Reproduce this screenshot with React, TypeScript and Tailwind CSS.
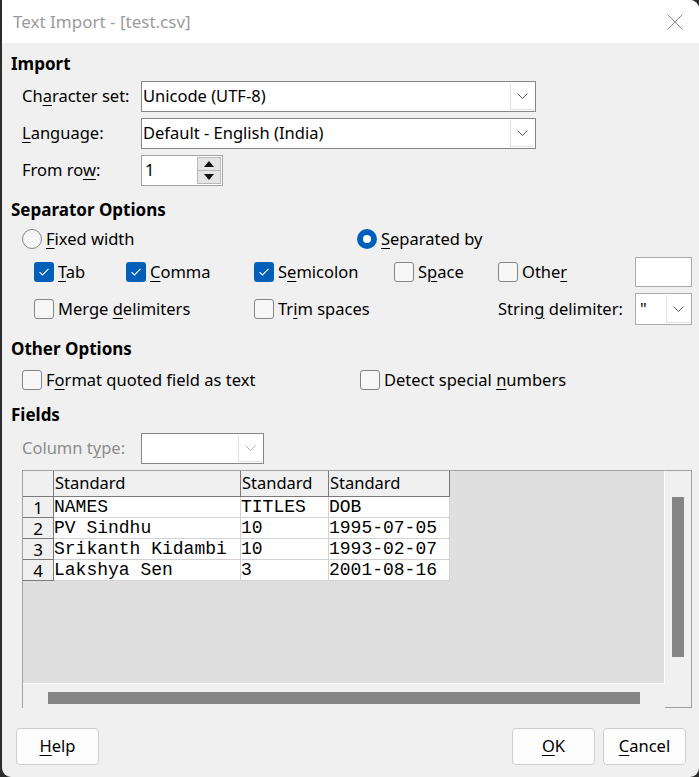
import React from 'react';
import clsx from 'clsx';

// Underlined access-key letter
const K: React.FC<{ children: React.ReactNode }> = ({ children }) => (
  <span className="underline decoration-1 underline-offset-[3px]">{children}</span>
);

const Chevron: React.FC<{ muted?: boolean }> = ({ muted }) => (
  <svg width="11" height="6" viewBox="0 0 11 6" fill="none">
    <path d="M0.5 0.5 L5.5 5.5 L10.5 0.5" stroke={muted ? '#b5b5b5' : '#5c5c5c'} strokeWidth="1" />
  </svg>
);

interface ComboProps {
  value?: string;
  className?: string;
  muted?: boolean;
  light?: boolean;
}

const Combo: React.FC<ComboProps> = ({ value, className, muted, light }) => (
  <div
    className={clsx(
      'flex bg-white border',
      light ? 'border-[#ababab]' : 'border-[#868686]',
      className
    )}
  >
    <div className="flex-1 flex items-center pl-[1px] truncate">{value}</div>
    <div className="w-[24px] my-[1px] mr-[1px] border-l border-b border-[#e2e2e2] flex items-center justify-center">
      <Chevron muted={muted} />
    </div>
  </div>
);

const Spin: React.FC<{ value: string }> = ({ value }) => (
  <div className="w-[82px] h-[31px] bg-white border border-[#a3a3a3] flex">
    <div className="flex-1 flex items-center pl-[3px]">{value}</div>
    <div className="w-[24px] mr-[1px] my-[1px] flex flex-col">
      <div className="flex-1 bg-[#e5e5e5] border border-[#b8b8b8] flex items-center justify-center">
        <svg width="10" height="6" viewBox="0 0 10 6"><path d="M0 6 L5 0 L10 6 Z" fill="#111" /></svg>
      </div>
      <div className="flex-1 bg-[#e5e5e5] border border-t-0 border-[#b8b8b8] flex items-center justify-center">
        <svg width="10" height="6" viewBox="0 0 10 6"><path d="M0 0 L5 6 L10 0 Z" fill="#111" /></svg>
      </div>
    </div>
  </div>
);

const CheckBox: React.FC<{ checked?: boolean; children: React.ReactNode; className?: string }> = ({
  checked,
  children,
  className
}) => (
  <div className={clsx('flex items-center gap-[4px]', className)}>
    {checked ? (
      <span className="w-[20px] h-[20px] rounded-[3px] bg-[#005fb8] flex items-center justify-center">
        <svg width="12" height="10" viewBox="0 0 12 10" fill="none">
          <path d="M1.5 5.2 L4.5 8 L10.5 1.8" stroke="#fff" strokeWidth="1.1" />
        </svg>
      </span>
    ) : (
      <span className="w-[20px] h-[20px] rounded-[3px] border border-[#858585] bg-[#f7f7f7]" />
    )}
    <span>{children}</span>
  </div>
);

const Radio: React.FC<{ checked?: boolean; children: React.ReactNode; className?: string }> = ({
  checked,
  children,
  className
}) => (
  <div className={clsx('flex items-center gap-[4px]', className)}>
    {checked ? (
      <span className="w-[20px] h-[20px] rounded-full bg-[#005fb8] flex items-center justify-center">
        <span className="w-[8px] h-[8px] rounded-full bg-white" />
      </span>
    ) : (
      <span className="w-[20px] h-[20px] rounded-full border border-[#858585] bg-[#f7f7f7]" />
    )}
    <span>{children}</span>
  </div>
);

const Heading: React.FC<{ children: React.ReactNode; className?: string }> = ({ children, className }) => (
  <div className={clsx('h-[20px] leading-[20px] font-bold text-[17px]', className)}>{children}</div>
);

const rows = [
  ['NAMES', 'TITLES', 'DOB'],
  ['PV Sindhu', '10', '1995-07-05'],
  ['Srikanth Kidambi', '10', '1993-02-07'],
  ['Lakshya Sen', '3', '2001-08-16']
];

const colWidths = ['w-[187px]', 'w-[88px]', 'w-[121px]'];

const Preview: React.FC = () => (
  <div className="ml-[11px] mt-[6px] w-[670px] h-[238px] border-l border-t border-r border-[#a0a0a0] flex">
    <div className="w-[642px] flex flex-col">
      <div className="h-[213px] bg-[#dfdfdf] border-r border-b border-white">
        {/* column header */}
        <div className="flex h-[26px]">
          <div className="w-[31px] bg-[#f0f0f0] border-r border-b border-[#7a7a7a]" />
          {colWidths.map((w, i) => (
            <div
              key={i}
              className={clsx(w, 'bg-[#f0f0f0] border-r border-b border-[#7a7a7a] flex items-center pl-[1px]')}
            >
              Standard
            </div>
          ))}
        </div>
        {rows.map((r, ri) => (
          <div key={ri} className="flex h-[21px]">
            <div className="w-[31px] bg-[#f0f0f0] border-r border-b border-[#7a7a7a] flex items-end justify-center leading-[18px] text-[17px]">
              {ri + 1}
            </div>
            {r.map((c, ci) => (
              <div
                key={ci}
                className={clsx(
                  colWidths[ci],
                  'bg-white border-r border-b border-[#d2d2d2] font-["Liberation_Mono",monospace] text-[18px] leading-[20px] whitespace-pre'
                )}
              >
                {c}
              </div>
            ))}
          </div>
        ))}
      </div>
      <div className="h-[24px] pt-[8px] pl-[25px]">
        <div className="w-[592px] h-[12px] bg-[#858585]" />
      </div>
    </div>
    <div className="w-[26px] border-b border-[#a0a0a0] pt-[26px] pl-[7px]">
      <div className="w-[12px] h-[160px] bg-[#858585]" />
    </div>
  </div>
);

const DialogButton: React.FC<{ children: React.ReactNode }> = ({ children }) => (
  <button className="w-[83px] h-[37px] rounded-[4px] border border-[#cfcfcf] bg-[#fdfdfd] flex items-center justify-center">
    {children}
  </button>
);

export default function App() {
  return (
    <div className="w-[699px] h-[777px] bg-[#2c2c2c] overflow-hidden font-['Noto_Sans',sans-serif] text-[16.5px] text-black">
      <div className="ml-[2px] h-full rounded-tr-[9px] rounded-br-[9px] rounded-bl-[9px] overflow-hidden bg-[#f0f0f0] flex flex-col">
        {/* title bar */}
        <div className="h-[43px] bg-white flex items-center justify-between pl-[11px] pr-[16px] shrink-0">
          <span className="text-[#9b9b9b] text-[17px]">Text Import - [test.csv]</span>
          <svg width="16" height="16" viewBox="0 0 16 16" fill="none">
            <path d="M0.5 0.5 L15.5 15.5 M15.5 0.5 L0.5 15.5" stroke="#8a8a8a" strokeWidth="1" />
          </svg>
        </div>

        <div className="pl-[9px] flex flex-col">
          <Heading className="mt-[11px]">Import</Heading>
          <div className="ml-[11px] mt-[7px] flex flex-col gap-[6px]">
            <div className="flex h-[31px] items-center">
              <span className="w-[119px]">Ch<K>a</K>racter set:</span>
              <Combo value="Unicode (UTF-8)" className="w-[395px] h-[31px]" />
            </div>
            <div className="flex h-[31px] items-center">
              <span className="w-[119px]"><K>L</K>anguage:</span>
              <Combo value="Default - English (India)" className="w-[395px] h-[31px]" />
            </div>
            <div className="flex h-[31px] items-center">
              <span className="w-[119px]">From ro<K>w</K>:</span>
              <Spin value="1" />
            </div>
          </div>

          <Heading className="mt-[14px]">Separator Options</Heading>
          <div className="ml-[11px] mt-[9px] h-[20px] flex">
            <Radio className="w-[335px]"><K>F</K>ixed width</Radio>
            <Radio checked><K>S</K>eparated by</Radio>
          </div>
          <div className="ml-[23px] mt-[8px] h-[30px] flex items-center">
            <CheckBox checked className="w-[92px]"><K>T</K>ab</CheckBox>
            <CheckBox checked className="w-[128px]"><K>C</K>omma</CheckBox>
            <CheckBox checked className="w-[140px]">S<K>e</K>micolon</CheckBox>
            <CheckBox className="w-[104px]">S<K>p</K>ace</CheckBox>
            <CheckBox className="w-[137px]">Othe<K>r</K></CheckBox>
            <div className="w-[57px] h-[30px] bg-white border border-[#ababab]" />
          </div>
          <div className="ml-[23px] mt-[6px] h-[32px] flex items-center">
            <CheckBox className="w-[220px]">Merge <K>d</K>elimiters</CheckBox>
            <CheckBox className="w-[244px]">Tr<K>i</K>m spaces</CheckBox>
            <span className="w-[137px]">Strin<K>g</K> delimiter:</span>
            <Combo value={'"'} light className="w-[57px] h-[32px] [&>div:first-child]:pl-[4px]" />
          </div>

          <Heading className="mt-[14px]">Other Options</Heading>
          <div className="ml-[11px] mt-[11px] h-[20px] flex">
            <CheckBox className="w-[338px]">F<K>o</K>rmat quoted field as text</CheckBox>
            <CheckBox>Detect special <K>n</K>umbers</CheckBox>
          </div>

          <Heading className="mt-[15px]">Fields</Heading>
          <div className="ml-[11px] mt-[8px] h-[31px] flex items-center">
            <span className="w-[119px] text-[#8c8c8c]">Column t<K>y</K>pe:</span>
            <Combo muted className="w-[123px] h-[31px]" />
          </div>

          <Preview />

          <div className="mt-[20px] ml-[5px] mr-[13px] flex justify-between">
            <DialogButton><K>H</K>elp</DialogButton>
            <div className="flex gap-[8px]">
              <DialogButton><K>O</K>K</DialogButton>
              <DialogButton><K>C</K>ancel</DialogButton>
            </div>
          </div>
        </div>
      </div>
    </div>
  );
}
